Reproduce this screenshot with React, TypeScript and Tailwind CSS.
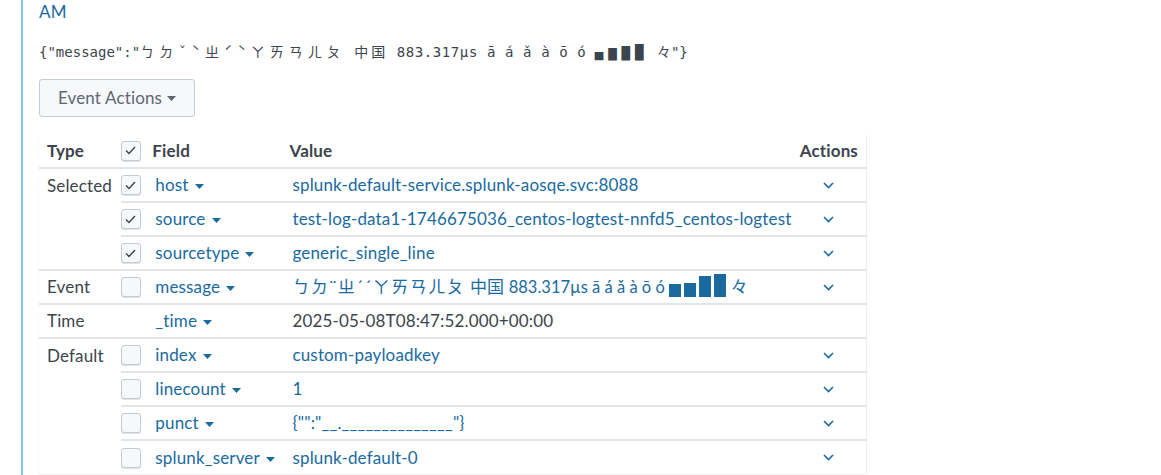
import React from 'react';

type Row = {
  type?: string;
  checked: boolean | null;
  field: string;
  value: React.ReactNode;
  link: boolean;
  action: boolean;
  first: boolean;
};

const messageValue = (
  <>
    <span className="tracking-[1.5px]">ㄅㄉ¨ㄓ´ˊㄚㄞㄢㄦㄆ</span> 中国{' '}
    <span className="text-[16.5px] tracking-normal">883.317µs ā á ǎ à ō ó</span>{' '}
    <span className="inline-flex items-end gap-[3px] align-[-4px]">
      <span className="inline-block h-[13px] w-[12px] bg-[#1a6a9f]" />
      <span className="inline-block h-[14px] w-[12px] bg-[#1a6a9f]" />
      <span className="inline-block h-[21px] w-[12px] bg-[#1a6a9f]" />
      <span className="inline-block h-[23px] w-[12px] bg-[#1a6a9f]" />
    </span>{' '}
    々
  </>
);

const rows: Row[] = [
  { type: 'Selected', checked: true, field: 'host', value: 'splunk-default-service.splunk-aosqe.svc:8088', link: true, action: true, first: true },
  { checked: true, field: 'source', value: 'test-log-data1-1746675036_centos-logtest-nnfd5_centos-logtest', link: true, action: true, first: false },
  { checked: true, field: 'sourcetype', value: 'generic_single_line', link: true, action: true, first: false },
  { type: 'Event', checked: false, field: 'message', value: messageValue, link: true, action: true, first: true },
  { type: 'Time', checked: null, field: '_time', value: '2025-05-08T08:47:52.000+00:00', link: false, action: false, first: true },
  { type: 'Default', checked: false, field: 'index', value: 'custom-payloadkey', link: true, action: true, first: true },
  { checked: false, field: 'linecount', value: '1', link: true, action: true, first: false },
  { checked: false, field: 'punct', value: '{"":"__.______________"}', link: true, action: true, first: false },
  { checked: false, field: 'splunk_server', value: 'splunk-default-0', link: true, action: true, first: false },
];

function Checkbox({ checked }: { checked: boolean }) {
  return (
    <span className="inline-flex h-[20px] w-[20px] items-center justify-center rounded-[3px] border border-[#c3cbd4] bg-[#f7f8fa] shadow-[0_1px_0_#dfe3e8]">
      {checked && (
        <svg width="11" height="9" viewBox="0 0 11 9" fill="none">
          <path d="M1 4.5 L4 7.5 L10 1" stroke="#3c444d" strokeWidth="1.4" />
        </svg>
      )}
    </span>
  );
}

function Caret() {
  return (
    <svg width="9" height="5" viewBox="0 0 9 5" className="ml-[6px] inline-block align-middle">
      <path d="M0 0 H9 L4.5 5 Z" fill="#1a6a9f" />
    </svg>
  );
}

function Chevron() {
  return (
    <svg width="11" height="7" viewBox="0 0 11 7" fill="none">
      <path d="M1 1 L5.5 5.5 L10 1" stroke="#1a6a9f" strokeWidth="1.6" />
    </svg>
  );
}

export default function App() {
  return (
    <div
      className="h-[475px] w-[1161px] bg-white pl-[21px] text-[#3c444d] tracking-[0.15px]"
      style={{ fontFamily: 'Lato, "Noto Sans CJK TC", sans-serif' }}
    >
      <div className="h-full border-l-[2px] border-[#80c9f2] pl-[16px]">
        <div className="pt-[2px] text-[17px] leading-[20px] text-[#1a6a9f]">AM</div>

        <div
          className="mt-[20px] text-[14px] leading-[20px] tracking-normal text-[#3c444d]"
          style={{ fontFamily: '"DejaVu Sans Mono", "Noto Sans CJK TC", monospace' }}
        >
          {'{"message":"'}
          <span className="tracking-[5px]">ㄅㄉˇˋㄓˊˋㄚㄞㄢㄦㄆ</span> <span className="tracking-[3px]">中国</span>{' '}
          <span className="tracking-[0.6px]">883.317µs ā á ǎ à ō ó</span>{' '}
          <span className="tracking-[5px]">▄▆▇█</span> 々{'"}'}
        </div>

        <button className="mt-[17px] flex h-[38px] w-[156px] items-center justify-center rounded-[3px] border border-[#c3cbd4] bg-[#f7f8fa] text-[17px] text-[#5c6773]">
          Event Actions
          <svg width="9" height="5" viewBox="0 0 9 5" className="ml-[5px]">
            <path d="M0 0 H9 L4.5 5 Z" fill="#5c6773" />
          </svg>
        </button>

        <table className="mt-[17px] w-[827px] border-collapse text-[17px] shadow-[0_2px_2px_rgba(0,0,0,0.06),1px_0_0_#f0f2f4]">
          <thead>
            <tr className="h-[34px] border-b-[2px] border-[#e1e6eb]">
              <th className="w-[83px] pl-[8px] text-left font-bold">Type</th>
              <th className="w-[28px] pt-[2px] text-left align-top">
                <Checkbox checked />
              </th>
              <th className="w-[140px] pl-[5px] text-left font-bold">Field</th>
              <th className="pl-[4px] text-left font-bold">Value</th>
              <th className="w-[76px] pr-[8px] text-right font-bold">Actions</th>
            </tr>
          </thead>
          <tbody>
            {rows.map((r, i) => {
              const b = i === 0 ? '' : 'border-t-[2px] border-[#e1e6eb]';
              return (
                <tr key={i} className="h-[34px]">
                  <td className={`pl-[8px] ${r.first ? b : ''}`}>{r.type}</td>
                  <td className={`${b} align-middle`}>
                    {r.checked !== null && (
                      <span className="flex items-center">
                        <Checkbox checked={r.checked} />
                      </span>
                    )}
                  </td>
                  <td className={`${b} whitespace-nowrap pl-[8px] text-[#1a6a9f]`}>
                    {r.field}
                    <Caret />
                  </td>
                  <td className={`${b} whitespace-nowrap pl-[7px] ${r.link ? 'text-[#1a6a9f]' : 'text-[#3c444d]'}`}>
                    {r.value}
                  </td>
                  <td className={b}>
                    {r.action && (
                      <span className="flex pl-[32px]">
                        <Chevron />
                      </span>
                    )}
                  </td>
                </tr>
              );
            })}
          </tbody>
        </table>
      </div>
    </div>
  );
}
